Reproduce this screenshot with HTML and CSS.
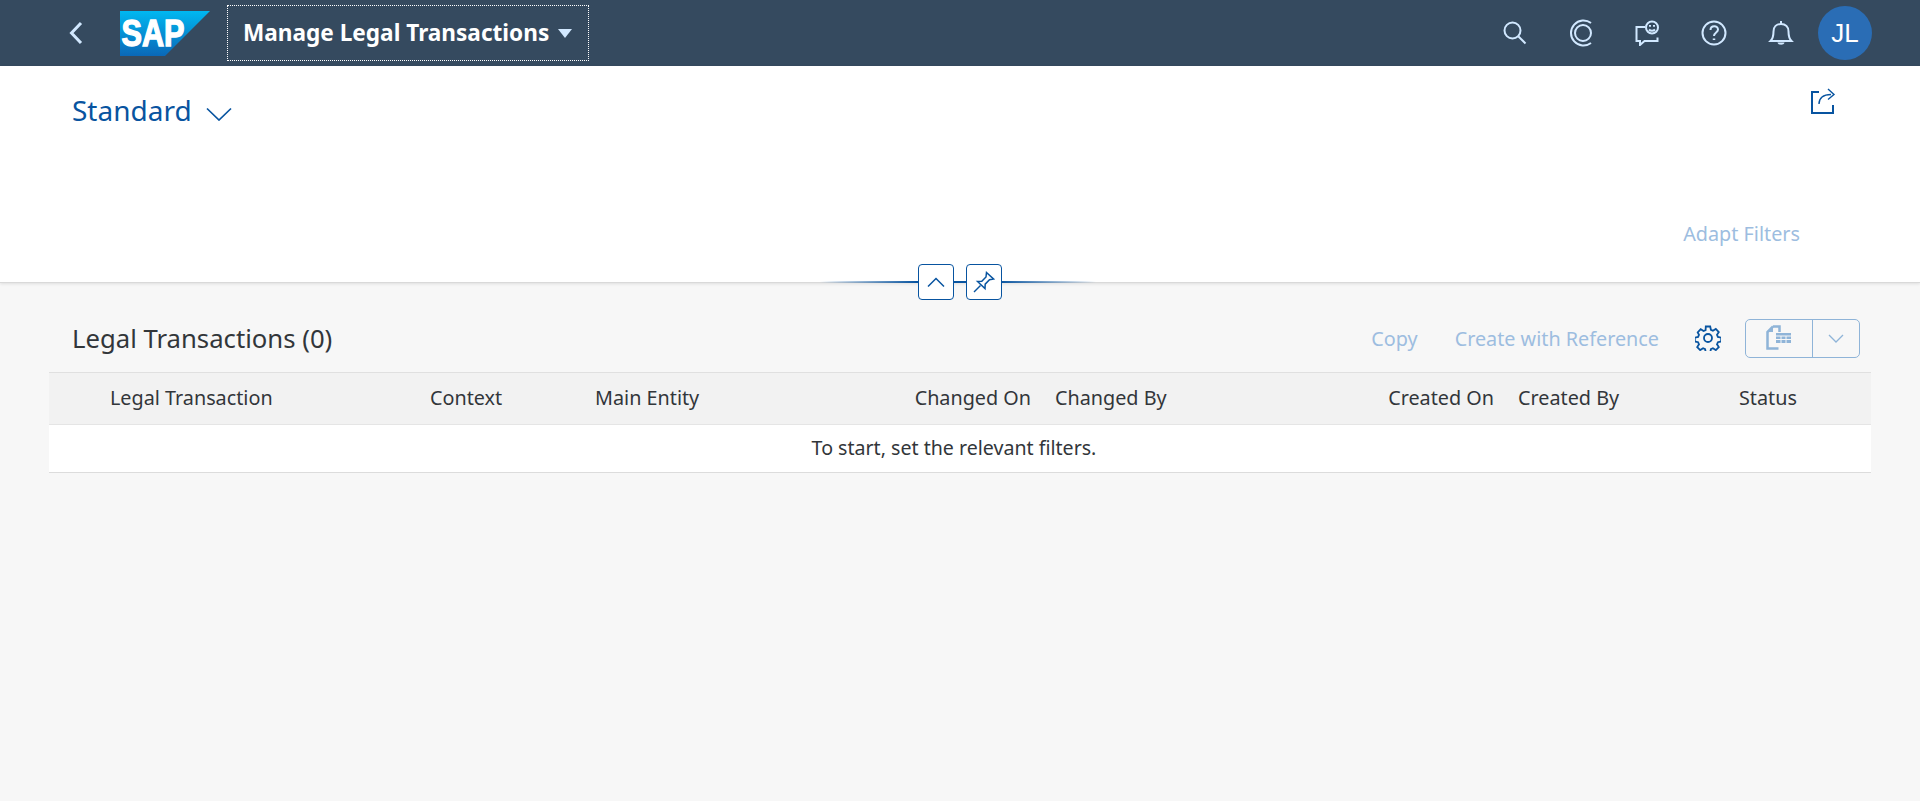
FILE: index.html
```html
<!DOCTYPE html>
<html lang="en">
<head>
<meta charset="UTF-8">
<title>Manage Legal Transactions</title>
<link rel="stylesheet" href="styles.css">
</head>
<body>

<!-- Shell header -->
<header class="shell">
  <svg class="back" width="14" height="24" viewBox="0 0 14 24"><path d="M12 2 2.500 12 12 22"/></svg>
  <svg class="logo" width="90" height="45" viewBox="0 0 90 45">
    <defs>
      <linearGradient id="sapblue" x1="0" y1="0" x2="0" y2="1">
        <stop offset="0" stop-color="#00b8f1"/>
        <stop offset="1" stop-color="#0a68b8"/>
      </linearGradient>
    </defs>
    <polygon points="0,0 90,0 45,45 0,45" fill="url(#sapblue)"/>
    <text class="logo-text" x="1.500" y="35" textLength="63" lengthAdjust="spacingAndGlyphs">SAP</text>
  </svg>
  <div class="app-title">
    <span>Manage Legal Transactions</span>
    <i class="caret"></i>
  </div>
  <div class="shell-icons">
    <svg class="ico" width="26" height="26" viewBox="0 0 26 26"><circle cx="10.500" cy="10.500" r="8"/><path d="m16.500 16.500 7 7"/></svg>
    <svg class="ico" width="26" height="28" viewBox="0 0 26 28"><path d="M23 4A12.500 12.500 0 1 0 23 24"/><circle cx="15" cy="14" r="8"/></svg>
    <svg class="ico" width="26" height="26" viewBox="0 0 26 26"><path d="M11 7H2.500v14H6V25l4.500-4H23.500V17.500"/><circle cx="18" cy="7.500" r="6"/><path d="M15 9.500c1.500 1.800 4.500 1.800 6 0"/><path d="M16 5v1.800M20 5v1.800"/></svg>
    <svg class="ico" width="28" height="28" viewBox="0 0 28 28"><circle cx="14" cy="14" r="11.500"/><path d="M10.500 11c0-5 7.500-5 7.500-.5 0 3-4 3-4 6.500"/><path class="dot" d="M14 19.500v1.500"/></svg>
    <svg class="ico" width="26" height="28" viewBox="0 0 26 28"><path d="M2.500 22c2.500-2.500 3-5 3-9.500 0-4.500 3-7.500 7.500-7.500s7.500 3 7.500 7.500c0 4.500.5 7 3 9.500z"/><path d="M13 2v3"/><path class="fill" d="M9.500 23.500h7c-.5 3-6.500 3-7 0z"/></svg>
    <div class="avatar">JL</div>
  </div>
</header>

<!-- Filter bar -->
<section class="filterbar">
  <div class="filter-top">
    <h1 class="variant">Standard</h1>
    <svg class="variant-arrow" width="26" height="14" viewBox="0 0 26 14"><path d="M1 1.500 13 13 25 1.500"/></svg>
    <svg class="share" width="26" height="26" viewBox="0 0 26 26"><path class="thick" d="M9 4H2v21h21v-8"/><path d="M9 16c0-6 4-9.500 12-9.500"/><path d="m18 1 6 5.500-6 5"/></svg>
  </div>
  <div class="filter-actions"><span class="disabled-link">Adapt Filters</span></div>

  <div class="collapse-line">
    <button class="mini-btn"><svg width="18" height="10" viewBox="0 0 18 10"><path d="M1 9.500 9 1.500l8 8"/></svg></button>
    <button class="mini-btn"><svg width="22" height="22" viewBox="0 0 22 22"><path d="M13.500 1.500 20.500 8l-4 .8-4.300 4.300-.2 4.400L4.500 10.500l4.300-.3L13 6z"/><path d="M7.500 14.500 1 21"/></svg></button>
  </div>
</section>

<!-- Tabela -->
<main class="content">
  <div class="toolbar">
    <h2 class="table-title">Legal Transactions (0)</h2>
    <span class="disabled-link copy">Copy</span>
    <span class="disabled-link create">Create with Reference</span>
    <svg class="gear" width="26" height="26" viewBox="0 0 26 26"><circle cx="13" cy="13" r="4"/><path d="M10.800 1.500h4.400l.7 3.300 2 .9 2.900-1.800 3 3.100-1.800 2.800.9 2.100 3.300.7v3.900l-3.300.7-.9 2.100 1.800 2.800-3 3-2.900-1.800-2 .9-.7 3.300h-4.400l-.7-3.300-2-.9-2.900 1.800-3-3 1.800-2.800-.9-2.100-3.300-.7v-3.900l3.300-.7.900-2.100L2.700 7.300l3-3.100 2.900 1.800 2-.9z"/></svg>
    <div class="split-btn">
      <div class="split-main">
        <svg width="26" height="26" viewBox="0 0 26 26"><path class="line" d="M7 1.500h6.500V7M7 1.500 1.500 7v16.500h11"/><path class="fold" d="M7 1.500V7H1.500z"/><path class="fold" d="M10 8h15v10H10z"/><path class="grid-lines" d="M10 11h15M10 14.500h15M15 11v7M20 11v7"/></svg>
      </div>
      <div class="split-arrow"><svg width="16" height="9" viewBox="0 0 16 9"><path d="M1 1 8 8l7-7"/></svg></div>
    </div>
  </div>

  <div class="table">
    <div class="row head">
      <div class="cell"></div>
      <div class="cell">Legal Transaction</div>
      <div class="cell">Context</div>
      <div class="cell">Main Entity</div>
      <div class="cell right">Changed On</div>
      <div class="cell">Changed By</div>
      <div class="cell right">Created On</div>
      <div class="cell">Created By</div>
      <div class="cell">Status</div>
    </div>
    <div class="no-data">To start, set the relevant filters.</div>
  </div>
</main>

</body>
</html>
```

FILE: styles.css
```css
* { box-sizing: border-box; }

body {
  margin: 0;
  height: 801px;
  overflow: hidden;
  background: #f7f7f7;
  color: #32363a;
  font-family: "Noto Sans", Arial, sans-serif;
  font-size: 19.8px;
}

/* Shell */
.shell {
  height: 66px;
  background: #354a5f;
  display: flex;
  align-items: center;
  padding-left: 69px;
}

.back { margin-right: 37px; }
.back path { fill: none; stroke: #d1e8ff; stroke-width: 3; }

.logo { margin-right: 17px; }
.logo-text {
  font-family: "Liberation Sans", Arial, sans-serif;
  font-weight: bold;
  font-size: 37px;
  fill: #fff;
  stroke: #fff;
  stroke-width: 1.4px;
}

.app-title {
  width: 362px;
  height: 56px;
  border: 1px dotted #fff;
  display: flex;
  align-items: center;
  padding: 0 0 2px 15px;
  color: #fff;
  font-weight: 700;
  font-size: 22.6px;
}

.caret {
  margin: 2px 0 0 9px;
  border-left: 7px solid transparent;
  border-right: 7px solid transparent;
  border-top: 9px solid #d1e8ff;
}

.shell-icons {
  margin-left: auto;
  margin-right: 48px;
  display: flex;
  align-items: center;
  gap: 40px;
}

.ico { fill: none; stroke: #d1e8ff; stroke-width: 2; }
.ico .fill { fill: #d1e8ff; stroke: none; }
.ico .dot { stroke-width: 2.500; }

.avatar {
  width: 54px;
  height: 54px;
  border-radius: 50%;
  background: #2a6db5;
  color: #fff;
  display: flex;
  align-items: center;
  justify-content: center;
  font-family: "Liberation Sans", Arial, sans-serif;
  font-size: 26px;
  margin-left: -16px;
}

/* Filter bar */
.filterbar {
  position: relative;
  height: 217px;
  background: #fff;
  border-bottom: 1px solid #d9d9d9;
  box-shadow: 0 1px 3px rgba(0,0,0,0.1);
}

.filter-top {
  height: 92px;
  display: flex;
  align-items: flex-start;
  padding: 22px 84px 0 72px;
}

.variant {
  margin: 0;
  font-weight: normal;
  font-size: 28px;
  line-height: 44px;
  color: #0854a0;
}

.variant-arrow { margin: 19px 0 0 14px; }
.variant-arrow path { fill: none; stroke: #0854a0; stroke-width: 1.700; }

.share { margin-left: auto; }
.share path { fill: none; stroke: #0854a0; stroke-width: 1.400; }
.share .thick { stroke-width: 2; }

.filter-actions {
  display: flex;
  justify-content: flex-end;
  padding: 62px 120px 0 0;
}

.disabled-link { color: #9dbde0; }

.collapse-line {
  position: absolute;
  left: 820px;
  top: 198px;
  width: 276px;
  height: 36px;
  padding-left: 4px;
  display: flex;
  justify-content: center;
  gap: 12px;
  background: linear-gradient(90deg, transparent, #0854a0 35%, #0854a0 65%, transparent) center / 100% 2px no-repeat;
}

.mini-btn {
  width: 36px;
  height: 36px;
  padding: 0;
  border: 1px solid #0854a0;
  border-radius: 4px;
  background: #fff;
  display: flex;
  align-items: center;
  justify-content: center;
}
.mini-btn path { fill: none; stroke: #0854a0; stroke-width: 1.500; }

/* Tabela */
.content { padding: 0 49px; }

.toolbar {
  height: 89px;
  display: flex;
  align-items: center;
  padding: 21px 11px 0 23px;
}

.table-title {
  margin: 0 auto 0 0;
  font-weight: normal;
  font-size: 25.700px;
}

.copy { margin-right: 37px; }
.create { margin-right: 36px; }

.gear { margin-right: 24px; }
.gear circle, .gear path { fill: none; stroke: #0854a0; stroke-width: 1.800; }

.split-btn {
  width: 115px;
  height: 39px;
  border: 1px solid #8fb4d8;
  border-radius: 5px;
  display: flex;
}

.split-main {
  width: 67px;
  border-right: 1px solid #8fb4d8;
  display: flex;
  align-items: center;
  justify-content: center;
}
.split-main .line { fill: none; stroke: #8fb4d8; stroke-width: 2.500; }
.split-main .fold { fill: #8fb4d8; }
.split-main .grid-lines { fill: none; stroke: #f7f7f7; stroke-width: 1; }

.split-arrow {
  flex: 1;
  display: flex;
  align-items: center;
  justify-content: center;
}
.split-arrow path { fill: none; stroke: #8fb4d8; stroke-width: 1.300; }

.table { border-top: 1px solid #e0e0e0; }

.row {
  display: grid;
  grid-template-columns: 49px 320px 165px 217px 243px 237px 226px 221px 144px;
}

.head {
  height: 52px;
  background: #f2f2f2;
  border-bottom: 1px solid #e5e5e5;
}

.cell {
  padding: 0 12px;
  line-height: 49px;
  white-space: nowrap;
}
.right { text-align: right; }

.no-data {
  height: 48px;
  padding-right: 12px;
  background: #fff;
  border-bottom: 1px solid #dcdcdc;
  text-align: center;
  font-size: 19.600px;
  line-height: 46px;
}
```
